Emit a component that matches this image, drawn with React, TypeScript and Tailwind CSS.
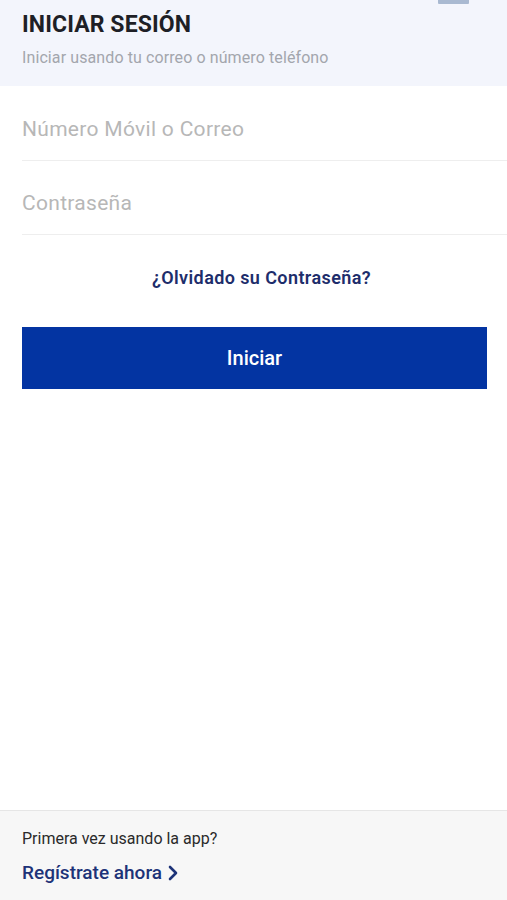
import React from 'react';

export default function App() {
  return (
    <div className="flex h-[900px] w-full flex-col bg-white font-['Roboto',sans-serif]">
      <header className="relative h-[86px] bg-[#f3f5fc] px-[22px] pt-[10px]">
        {/* top bar remnant */}
        <div className="absolute right-[38px] top-0 h-[4px] w-[31px] rounded-b-[1px] bg-[#a9b9d1]" />
        <h1 className="text-[23px] font-bold leading-[30px] tracking-[0.1px] text-[#1e1f26]">INICIAR SESIÓN</h1>
        <p className="mt-[8px] text-[16px] leading-[20px] tracking-[0.1px] text-[#a3a6ad]">Iniciar usando tu correo o número teléfono</p>
      </header>

      <div className="pl-[22px]">
        <div className="flex h-[75px] items-center border-b border-[#eeeeee] pt-[14px]">
          <span className="text-[21px] tracking-[0.3px] text-[#b7b7b7]">Número Móvil o Correo</span>
        </div>
        <div className="flex h-[74px] items-center border-b border-[#eeeeee] pt-[13px]">
          <span className="text-[21px] tracking-[0.3px] text-[#b7b7b7]">Contraseña</span>
        </div>
      </div>

      <div className="mt-[29px] pl-[16px] text-center text-[18px] font-semibold tracking-[0.4px] text-[#1d2d6b]">¿Olvidado su Contraseña?</div>

      <div className="mt-[36px] pl-[22px] pr-[20px]">
        <button className="flex h-[62px] w-full items-center justify-center bg-[#0334a2] text-[20px] font-medium text-white">
          Iniciar
        </button>
      </div>

      <div className="flex-1" />

      <footer className="h-[90px] border-t border-[#e6e6e6] bg-[#f7f7f7] px-[22px] pt-[18px]">
        <p className="text-[16px] leading-[20px] text-[#2a2a2a]">Primera vez usando la app?</p>
        <div className="mt-[10px] flex items-center gap-[6px] text-[19px] font-medium text-[#1d3378]">
          <span>Regístrate ahora</span>
          <svg width="10" height="16" viewBox="0 0 10 16" fill="none">
            <path d="M2 2l6 6-6 6" stroke="#1d3378" strokeWidth="2.6" strokeLinecap="round" strokeLinejoin="round" />
          </svg>
        </div>
      </footer>
    </div>
  );
}
